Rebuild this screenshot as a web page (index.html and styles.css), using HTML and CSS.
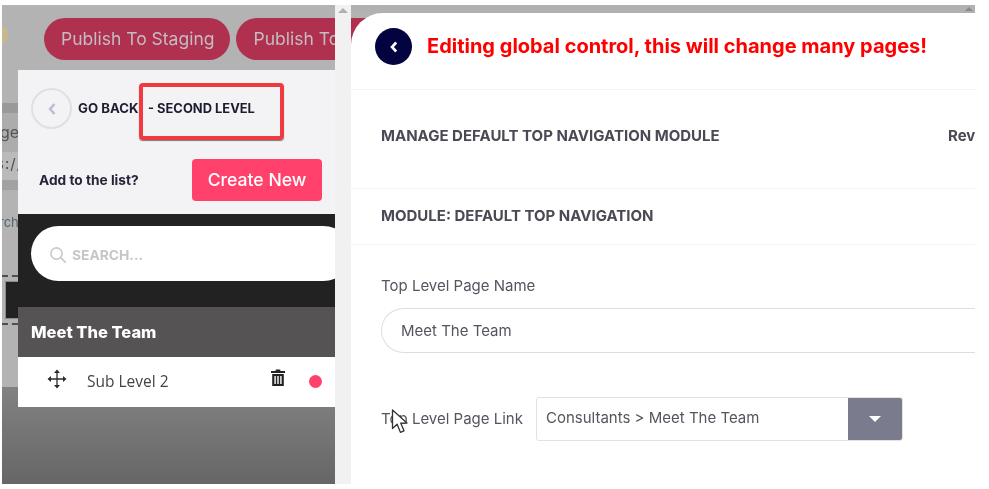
FILE: index.html
```html
<!DOCTYPE html>
<html lang="en">
<head>
<meta charset="utf-8">
<title>Editing global control</title>
<link rel="stylesheet" href="styles.css">
</head>
<body>
<div class="frame">
  <section class="left">
    <div class="backdrop">
      <div class="pills">
        <span class="avatar"></span>
        <span class="pill">Publish To Staging</span>
        <span class="pill">Publish To Production</span>
      </div>
      <div class="strip strip-dark"></div>
      <div class="strip strip-input">ge</div>
      <div class="strip strip-url">s://</div>
      <div class="strip strip-dark2"></div>
      <div class="strip strip-search">rch</div>
      <div class="strip strip-dashed"><span class="darkbox"></span></div>
      <div class="strip strip-fill"></div>
      <div class="strip strip-grad"></div>
    </div>
    <div class="panel">
      <div class="goback">
        <span class="backring">
          <svg width="10" height="14" viewBox="0 0 10 14"><path d="M7.5 2 3 7l4.5 5" fill="none" stroke="#b9bcd0" stroke-width="2.4"/></svg>
        </span>
        <span class="gotext">GO BACK</span>
        <span class="gotext level">- SECOND LEVEL</span>
        <span class="redbox"></span>
      </div>
      <div class="addrow">
        <span class="addlabel">Add to the list?</span>
        <span class="createbtn">Create New</span>
      </div>
      <div class="searchwrap">
        <div class="searchbox">
          <svg width="18" height="18" viewBox="0 0 18 18"><circle cx="7.5" cy="7.5" r="5.6" fill="none" stroke="#c9c9c9" stroke-width="1.6"/><path d="m11.7 11.7 5 5" stroke="#c9c9c9" stroke-width="1.8"/></svg>
          <span class="searchtext">SEARCH...</span>
        </div>
      </div>
      <div class="listhead">Meet The Team</div>
      <div class="listrow">
        <svg class="move" width="20" height="20" viewBox="0 0 20 20"><path d="M10 2v16M2 10h16" stroke="#2b2b2b" stroke-width="1.3"/><path d="m10 0.5 3 3.5H7zM10 19.5l3-3.5H7zM0.5 10 4 7v6zM19.5 10 16 7v6z" fill="#2b2b2b"/></svg>
        <span class="rowlabel">Sub Level 2</span>
        <svg class="trash" width="14" height="17" viewBox="0 0 14 17"><path d="M5 .5h4l.6 1.5H14v2H0V2h4.4z" fill="#222"/><path fill-rule="evenodd" d="M1.2 5h11.6v12H1.2zM3.4 7v8h1.4V7zm2.9 0v8h1.4V7zm2.9 0v8h1.4V7z" fill="#222"/></svg>
        <span class="dot"></span>
      </div>
    </div>
  </section>
  <div class="scrollbar"><span class="tri"></span></div>
  <section class="right">
    <div class="rightstrip"><span class="tri tri-dark"></span></div>
    <div class="editor">
      <header class="edhead">
        <span class="edback">
          <svg width="10" height="14" viewBox="0 0 10 14"><path d="M7.2 2.5 3 7l4.2 4.5" fill="none" stroke="#fff" stroke-width="2.6"/></svg>
        </span>
        <h1 class="edtitle">Editing global control, this will change many pages!</h1>
      </header>
      <div class="edrow manage">
        <span class="caps">MANAGE DEFAULT TOP NAVIGATION MODULE</span>
        <span class="caps rev">Rev</span>
      </div>
      <div class="edrow module">
        <span class="caps">MODULE: DEFAULT TOP NAVIGATION</span>
      </div>
      <div class="form">
        <div class="fieldlabel">Top Level Page Name</div>
        <div class="nameinput">Meet The Team</div>
        <div class="linkrow">
          <span class="fieldlabel linklabel">Top Level Page Link</span>
          <div class="select">
            <span class="selectval">Consultants &gt; Meet The Team</span>
            <span class="selectbtn"><span class="caret"></span></span>
          </div>
        </div>
      </div>
      <svg class="cursor" width="18" height="25" viewBox="0 0 18 25"><path d="M1.5 1v18.5l4.6-4.2 3.3 8 3.6-1.5-3.3-7.7H16z" fill="#fff" stroke="#333" stroke-width="1.3" stroke-linejoin="round"/></svg>
    </div>
  </section>
</div>
</body>
</html>
```
FILE: styles.css
```css
* { box-sizing: border-box; }
html, body { margin: 0; height: 100%; background: #fff; }
body { padding: 5px 14px 5px 2px; overflow: hidden; font-family: Inter, "Liberation Sans", sans-serif; }
.frame { display: flex; height: 479px; filter: blur(0.35px); }

/* left dimmed page */
.left { position: relative; width: 333px; overflow: hidden; flex: none; }
.backdrop { display: flex; flex-direction: column; height: 100%; background: #b3b3b3; }
.pills { position: relative; height: 98px; flex: none; display: flex; gap: 6px; padding: 13px 0 0 42px; white-space: nowrap; }
.avatar { position: absolute; left: -16px; top: 19px; width: 22px; height: 22px; border-radius: 50%; background: #c9b78d; }
.pill { flex: none; height: 42px; padding: 0 16px 0 17px; border-radius: 21px; background: #b0314f; color: #c3bcc0; font-size: 17.5px; line-height: 42px; }
.strip { flex: none; font-size: 16px; color: #555; line-height: 1; white-space: nowrap; overflow: hidden; }
.strip-dark { height: 10px; background: #999; }
.strip-input { height: 39px; background: #acacac; padding-top: 11px; text-indent: -2px; }
.strip-url { height: 28px; background: #bababa; padding-top: 4px; font-size: 15px; color: #4c4c4c; letter-spacing: 1px; text-indent: -6px; }
.strip-dark2 { height: 10px; background: #a2a2a2; }
.strip-search { height: 85px; padding-top: 26px; font-size: 13px; color: #52666e; text-indent: -3px; }
.strip-dashed { height: 50px; border-top: 2px dashed #4f4f4f; border-bottom: 2px dashed #4f4f4f; padding: 4px 0 0 3px; }
.darkbox { display: block; height: 38px; background: #222; border: 1px solid #8c8c8c; border-right: 0; }
.strip-fill { height: 62px; background: #b3b3b3; }
.strip-grad { flex: 1; background: linear-gradient(#828282, #666); }

.panel { position: absolute; left: 16px; top: 65px; right: 0; background: #f3f3f6; display: flex; flex-direction: column; }
.goback { position: relative; height: 89px; padding: 18px 0 0 13px; display: flex; align-items: flex-start; }
.backring { width: 41px; height: 41px; flex: none; border: 2px solid #dfdfe4; border-radius: 50%; display: flex; align-items: center; justify-content: center; }
.gotext { font-size: 13.2px; font-weight: 700; color: #1d1d30; line-height: 41px; white-space: nowrap; margin-left: 6px; }
.level { position: absolute; left: 130px; top: 18px; margin: 0; font-size: 12.9px; }
.redbox { position: absolute; left: 121px; top: 13px; width: 145px; height: 57px; border: 4px solid #ef3b3f; border-radius: 4px; box-shadow: 0 1px 1px #777; }
.addrow { height: 55px; display: flex; align-items: flex-start; justify-content: space-between; padding: 0 13px 0 21px; }
.addlabel { font-size: 13.7px; font-weight: 700; color: #26263a; line-height: 42px; }
.createbtn { width: 130px; height: 42px; border-radius: 4px; background: #ff416c; color: #fff; font-size: 17.6px; font-weight: 500; line-height: 42px; text-align: center; }
.searchwrap { height: 93px; background: #222; padding: 12px 0 0 13px; }
.searchbox { width: 320px; height: 55px; border-radius: 28px; background: #fff; display: flex; align-items: center; gap: 5px; padding: 2px 0 0 18px; }
.searchtext { font-size: 13.8px; font-weight: 700; color: #c6c6c6; }
.listhead { height: 50px; background: #555354; color: #fff; font-size: 16.5px; font-weight: 800; line-height: 50px; padding-left: 13px; }
.listrow { position: relative; height: 50px; background: #fff; display: flex; align-items: center; padding: 0 13px 0 29px; }
.move { flex: none; margin-top: -6px; }
.rowlabel { margin-left: 20px; margin-top: -2px; font-family: "Open Sans", sans-serif; font-size: 15.5px; color: #444; flex: 1; }
.trash { flex: none; margin: -10px 24px 0 0; }
.dot { width: 13px; height: 13px; margin-top: -1px; border-radius: 50%; background: #ff416c; flex: none; }

/* scrollbar */
.scrollbar { width: 16px; flex: none; background: #f1f1f1; padding: 3px 0 0 3px; }
.tri { display: block; width: 0; height: 0; border: 5px solid transparent; border-top: 0; border-bottom: 5px solid #b0b0b0; }

/* right editor */
.right { flex: 1; min-width: 0; display: flex; flex-direction: column; background: linear-gradient(#b3b3b3 13px, #b0314f 13px, #b0314f 55px, #fff 55px); }
.rightstrip { height: 8px; flex: none; background: #b1b1b1; display: flex; justify-content: flex-end; padding: 2px 2px 0 0; }
.tri-dark { border-bottom-color: #8a8a8a; border-width: 4px; border-top: 0; }
.editor { position: relative; flex: 1; background: #fff; border-top-left-radius: 32px; overflow: hidden; }
.edhead { height: 77px; padding: 15px 0 0 24px; display: flex; align-items: flex-start; gap: 15px; border-bottom: 1px solid #f3f3f3; }
.edback { width: 37px; height: 37px; flex: none; border-radius: 50%; background: #03033f; display: flex; align-items: center; justify-content: center; }
.edtitle { margin: 0; font-size: 20px; font-weight: 700; color: #ff0000; line-height: 36px; white-space: nowrap; }
.edrow { display: flex; justify-content: space-between; padding-left: 30px; border-bottom: 1px solid #f3f3f3; overflow: hidden; }
.manage { height: 99px; padding-top: 37px; }
.module { height: 56px; padding-top: 18px; }
.caps { font-size: 15px; font-weight: 700; color: #4a4a55; line-height: 18px; white-space: nowrap; }
.rev { flex: none; width: 27px; overflow: hidden; }
.form { padding: 32px 0 0 30px; }
.fieldlabel { font-size: 15px; color: #55555f; line-height: 18px; }
.nameinput { height: 45px; margin: 13px -8px 0 0; border: 1.5px solid #dedede; border-right: 0; border-radius: 23px 0 0 23px; padding-left: 19px; font-size: 15px; color: #55555f; line-height: 43px; }
.linkrow { display: flex; align-items: flex-start; gap: 13px; margin-top: 44px; }
.linklabel { padding-top: 13px; flex: none; }
.select { width: 367px; height: 44px; display: flex; border: 1px solid #e2e2e2; border-radius: 3px; overflow: hidden; }
.selectval { flex: 1; padding-left: 9px; font-size: 15px; color: #55555f; line-height: 40px; }
.selectbtn { width: 54px; flex: none; background: #7a7c8e; display: flex; align-items: center; justify-content: center; }
.caret { width: 0; height: 0; border: 6px solid transparent; border-bottom: 0; border-top: 6px solid #fff; }
.cursor { position: absolute; left: 40px; top: 396px; }
```
